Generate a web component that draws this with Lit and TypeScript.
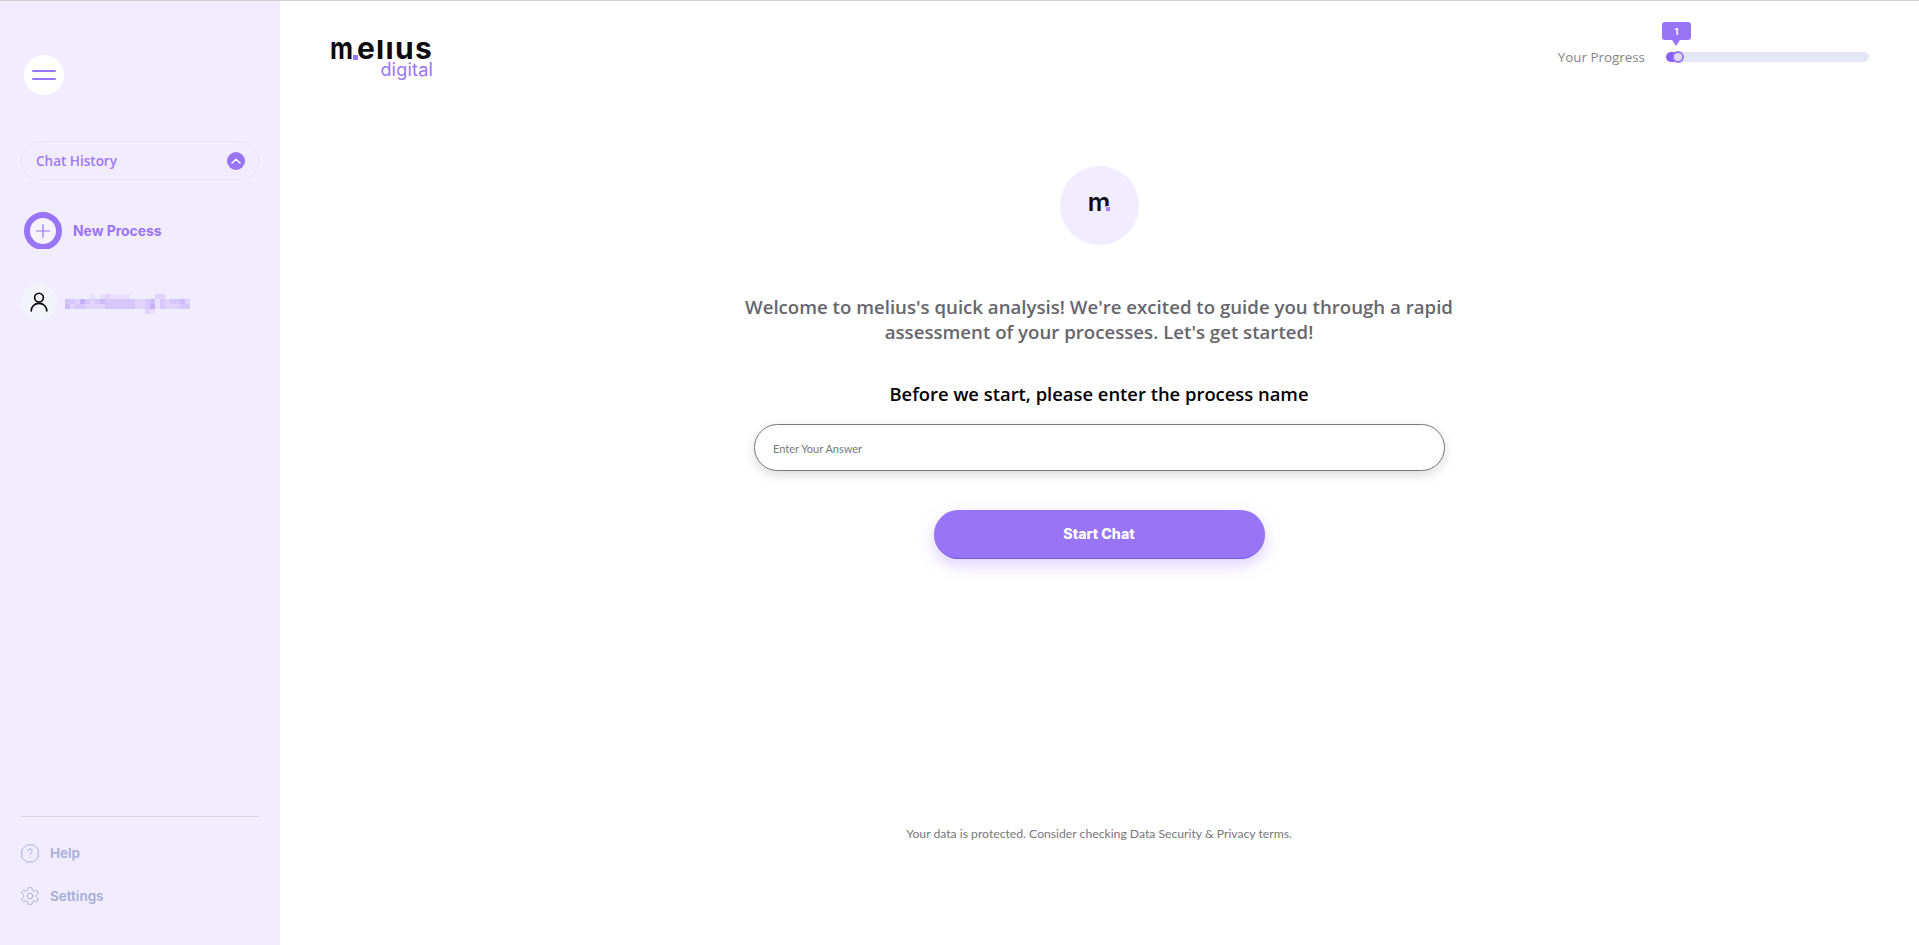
import { LitElement, html, css, svg } from "lit";
import { customElement } from "lit/decorators.js";

// Mosaic for the pixelated e-mail: each digit is one 5px cell's opacity in tenths
const rows = [
  ".....1.121111.....22......",
  "3325323433333322341323342",
  "4233222233333322351322233",
  "................21........",
];
const cells: [number, number, number][] = rows.flatMap((s, r) =>
  [...s].flatMap((c, i): [number, number, number][] => (c === "." ? [] : [[i, r, Number(c) / 10]]))
);

@customElement("app-root")
export class AppRoot extends LitElement {
  static styles = css`
    :host { display: block; height: 945px; overflow: hidden; background: #fff; font-family: "Open Sans", sans-serif; }
    .page { display: flex; height: 944px; border-top: 1px solid #cfcfcf; }
    .side { width: 280px; flex: none; box-sizing: border-box; background: #f1ecfe; padding: 54px 21px 0; display: flex; flex-direction: column; font-family: Inter, sans-serif; }
    .burger { width: 40px; height: 40px; margin-left: 3px; border-radius: 50%; background: #fff; display: flex; flex-direction: column; justify-content: center; align-items: center; gap: 6px; }
    .burger i { display: block; width: 24px; height: 2px; background: #9a74f6; border-radius: 1px; }
    .history { margin-top: 46px; height: 39px; box-sizing: border-box; border: 1px solid #e8e6f6; border-radius: 20px; display: flex; align-items: center; justify-content: space-between; padding: 0 13px 0 14px; color: #9d78f6; font-family: "Open Sans", sans-serif; font-size: 13.5px; font-weight: 600; }
    .chev { width: 18px; height: 18px; border-radius: 50%; background: #9a74f6; display: flex; align-items: center; justify-content: center; }
    .new { margin: 32px 0 0 3px; display: flex; align-items: center; gap: 11px; color: #9a74f6; font-size: 13.9px; font-weight: 700; }
    .plus { width: 38px; height: 38px; box-sizing: border-box; border: 6px solid #9a74f6; border-radius: 50%; background: #f6f2ff; display: flex; align-items: center; justify-content: center; clip-path: inset(0 0 1px 0); }
    .user { margin-top: 34px; display: flex; align-items: center; gap: 8px; }
    .avatar { width: 36px; height: 36px; border-radius: 50%; background: #f2f3fb; display: flex; align-items: center; justify-content: center; }
    .blur { display: block; margin-top: 3px; }
    .foot { margin-top: auto; border-top: 1px solid #d9d5ea; padding: 27px 0 40px; display: flex; flex-direction: column; gap: 25px; color: #a5afd8; font-size: 13.5px; font-weight: 600; }
    .foot div { display: flex; align-items: center; gap: 11px; height: 18px; }
    .main { flex: 1; min-width: 0; display: flex; flex-direction: column; }
    .top { height: 108px; flex: none; box-sizing: border-box; padding: 33px 50px 0 49px; display: flex; justify-content: space-between; align-items: flex-start; }
    .logo { display: flex; flex-direction: column; align-items: flex-end; width: 104px; font-family: Inter, sans-serif; }
    .logo b { position: relative; display: block; margin-top: 1px; font-size: 30px; line-height: 27px; font-weight: 700; color: #0b0b10; letter-spacing: 1.3px; white-space: nowrap; clip-path: inset(5px 0 0 0); }
    .logo b u { display: inline-block; width: 27px; text-decoration: none; transform: scaleX(0.84); transform-origin: left; }
    .logo span { display: block; font-size: 18px; line-height: 17px; color: #9a74f6; font-weight: 400; letter-spacing: 0.2px; margin-top: -1px; }
    .dot { position: absolute; background: #9a74f6; }
    .logo .dot { left: 23px; top: 20px; width: 5px; height: 5px; }
    .progress { position: relative; display: flex; align-items: center; gap: 21px; margin-top: 13px; color: #85858c; font-size: 13.4px; height: 20px; }
    .track { position: relative; width: 203px; height: 10px; border-radius: 5px; background: #e4e6f3; }
    .fill { width: 15px; height: 10px; border-radius: 5px; background: #8b5ff5; }
    .knob { position: absolute; left: 6px; top: -1px; width: 12px; height: 12px; box-sizing: border-box; border: 2px solid #9a74f6; border-radius: 50%; background: #dcd9f0; }
    .bubble { position: absolute; left: -4px; top: -30px; width: 29px; height: 18px; border-radius: 3px; background: #9a74f6; color: #fff; font-size: 9px; font-weight: 700; display: flex; align-items: center; justify-content: center; font-family: Inter, sans-serif; }
    .bubble::after { content: ""; position: absolute; left: 10px; top: 18px; border: 4px solid transparent; border-top: 6px solid #9a74f6; border-bottom: 0; }
    .content { display: flex; flex-direction: column; align-items: center; margin-left: -1px; }
    .mark { margin-top: 57px; width: 79px; height: 79px; border-radius: 50%; background: #f1ecfe; display: flex; align-items: center; justify-content: center; font-family: Inter, sans-serif; }
    .mark b { position: relative; font-size: 25px; line-height: 25px; font-weight: 600; color: #0b0b10; top: -3px; }
    .mark .dot { right: 0; top: 17px; width: 4px; height: 4px; background: #a582fb; box-shadow: 0 -1px 0 #f1ecfe, -1px 0 0 #f1ecfe, 0 2px 0 #f1ecfe; }
    .welcome { margin: 49px 0 0; font-size: 18.65px; line-height: 25px; font-weight: 600; color: #66666c; text-align: center; width: 760px; }
    .before { margin: 36px 0 0; font-size: 18.4px; line-height: 28px; font-weight: 600; color: #000; }
    .field { margin: 16px 0 0 1px; width: 691px; height: 47px; box-sizing: border-box; border: 1px solid #77777c; border-radius: 24px; padding: 1px 18px 0; display: flex; align-items: center; font-family: Lato, sans-serif; font-size: 11px; color: #77777c; box-shadow: 0 4px 12px rgba(0, 0, 0, 0.14); background: #fff; }
    .start { margin-top: 39px; width: 331px; height: 49px; box-sizing: border-box; border: 0; border-bottom: 1px solid #7f55f0; border-radius: 25px; padding: 0 0 2px; background: #9875f6; color: #fff; font-family: Inter, sans-serif; font-size: 14.2px; font-weight: 800; box-shadow: 0 6px 16px rgba(152, 117, 246, 0.35); }
    .note { margin-top: auto; margin-bottom: 104px; text-align: center; font-family: Lato, sans-serif; font-size: 12.2px; color: #77777c; margin-left: -1px; }
  `;

  render() {
    return html`<div class="page">
      <aside class="side">
        <div class="burger"><i></i><i></i></div>
        <div class="history">Chat History
          <span class="chev"><svg width="10" height="6" viewBox="0 0 10 6" fill="none" stroke="#fff" stroke-width="1.4" stroke-linecap="round" stroke-linejoin="round"><path d="M1 5 5 1.2 9 5"/></svg></span>
        </div>
        <div class="new">
          <span class="plus"><svg width="14" height="14" viewBox="0 0 14 14" stroke="#9a74f6" stroke-width="1.2"><path d="M7 0v14M0 7h14"/></svg></span>
          New Process
        </div>
        <div class="user">
          <span class="avatar"><svg width="18" height="20" viewBox="0 0 18 20" fill="none" stroke="#000" stroke-width="1.6" stroke-linecap="round"><circle cx="9" cy="5.6" r="4.4"/><path d="M1.2 19c0-4.600 3.400-7.600 7.800-7.600s7.800 3 7.800 7.600"/></svg></span>
          <svg class="blur" width="130" height="20" viewBox="0 0 130 20">
            ${cells.map(([x, y, o]) => svg`<rect x=${x * 5} y=${y * 5} width="5" height="5" fill="#9a74f6" opacity=${o}/>`)}
          </svg>
        </div>
        <div class="foot">
          <div><svg width="18" height="19" viewBox="0 0 18 19" fill="none" stroke="#a5afd8" stroke-width="1" stroke-linejoin="round"><path d="M5.500 1h7L17.200 5.500v8L12.500 18h-7L.8 13.500v-8z"/><path d="M6.800 7.200C6.800 5.900 7.800 5 9 5s2.200.9 2.200 2.100c0 1.700-2.200 1.800-2.200 3.600"/><path d="M9 12.600v1.200"/></svg>Help</div>
          <div><svg width="18" height="18" viewBox="2 2 20 20" fill="none" stroke="#a5afd8" stroke-width="1.1" stroke-linejoin="round"><path d="M12.220 2h-.44a2 2 0 0 0-2 2v.18a2 2 0 0 1-1 1.730l-.43.25a2 2 0 0 1-2 0l-.15-.08a2 2 0 0 0-2.730.73l-.22.38a2 2 0 0 0 .73 2.730l.15.1a2 2 0 0 1 1 1.720v.51a2 2 0 0 1-1 1.740l-.15.09a2 2 0 0 0-.73 2.730l.22.38a2 2 0 0 0 2.730.73l.15-.08a2 2 0 0 1 2 0l.43.25a2 2 0 0 1 1 1.730V20a2 2 0 0 0 2 2h.44a2 2 0 0 0 2-2v-.18a2 2 0 0 1 1-1.730l.43-.25a2 2 0 0 1 2 0l.15.08a2 2 0 0 0 2.730-.73l.22-.39a2 2 0 0 0-.73-2.730l-.15-.08a2 2 0 0 1-1-1.740v-.5a2 2 0 0 1 1-1.740l.15-.09a2 2 0 0 0 .73-2.730l-.22-.38a2 2 0 0 0-2.730-.73l-.15.08a2 2 0 0 1-2 0l-.43-.25a2 2 0 0 1-1-1.730V4a2 2 0 0 0-2-2z"/><circle cx="12" cy="12" r="3"/></svg>Settings</div>
        </div>
      </aside>
      <main class="main">
        <header class="top">
          <div class="logo"><b><u>m</u>elius<i class="dot"></i></b><span>digital</span></div>
          <div class="progress">Your Progress
            <div class="track"><div class="fill"></div><div class="knob"></div><div class="bubble">1</div></div>
          </div>
        </header>
        <section class="content">
          <div class="mark"><b>m<i class="dot"></i></b></div>
          <p class="welcome">Welcome to melius's quick analysis! We're excited to guide you through a rapid<br />assessment of your processes. Let's get started!</p>
          <p class="before">Before we start, please enter the process name</p>
          <div class="field">Enter Your Answer</div>
          <button class="start">Start Chat</button>
        </section>
        <footer class="note">Your data is protected. Consider checking Data Security &amp; Privacy terms.</footer>
      </main>
    </div>`;
  }
}
